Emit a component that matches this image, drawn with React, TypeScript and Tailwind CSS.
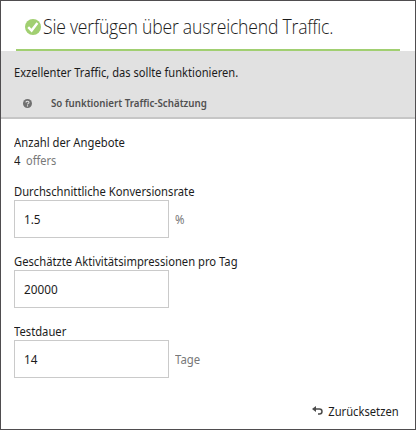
import React from "react";

type FieldProps = {
  label: string;
  value: string;
  unit?: string;
  className: string;
};

function Field({ label, value, unit, className }: FieldProps) {
  return (
    <div className={className}>
      <div className="h-[18px] leading-[20px]">
        <span className="inline-block origin-left scale-x-[0.897]">{label}</span>
      </div>
      <div className="flex items-center gap-1.5">
        <div className="flex h-[38px] w-[155px] items-center border border-[#cacaca] bg-white pl-[9px] pt-[2px]">
          <span className="inline-block origin-left scale-x-[0.94]">{value}</span>
        </div>
        {unit && <span className="inline-block origin-left scale-x-[0.91] pt-[2px] text-[#787878]">{unit}</span>}
      </div>
    </div>
  );
}

export default function App() {
  return (
    <div className="h-[430px] w-[416px] overflow-hidden whitespace-nowrap border border-[#4f4d4f] bg-white font-['Noto_Sans','Open_Sans',sans-serif] text-[12.5px] text-[#1c1c1c]">
      <div className="px-[15px]">
        <div className="flex h-[50px] w-[384px] items-center border-b-2 border-[#a1cf71] pl-[9px] pt-[4px]">
          <svg className="h-4 w-4 shrink-0" viewBox="0 0 16 16">
            <circle cx="8" cy="8" r="8" fill="#a1cf71" />
            <path d="M3.2 8.2 6.6 11.6 12.4 4.1" fill="none" stroke="#fff" strokeWidth="2.4" />
          </svg>
          <h1 className="ml-[2px] origin-left scale-x-[0.88] font-['Open_Sans',sans-serif] text-[20px] font-light leading-6 tracking-[-0.25px]">
            Sie verfügen über ausreichend Traffic.
          </h1>
        </div>
      </div>
      <div className="h-[68px] border-b-2 border-[#c6c6c6] bg-[#e1e1e1] pl-[13px] pt-[13px]">
        <div className="leading-[18px]">
          <span className="inline-block origin-left scale-x-[0.89]">Exzellenter Traffic, das sollte funktionieren.</span>
        </div>
        <div className="mt-[12px] flex h-[18px] items-center pl-[9px] text-[11px] font-semibold text-[#505050]">
          <svg className="h-[9px] w-[9px]" viewBox="0 0 9 9">
            <circle cx="4.5" cy="4.5" r="4.5" fill="#707070" />
            <path d="M3 3.5C3 1.7 6 1.8 6 3.5 6 4.4 4.5 4.4 4.5 5.5M4.5 6.3V7.4" fill="none" stroke="#e1e1e1" strokeWidth="1.1" />
          </svg>
          <span className="ml-[19px] origin-left scale-x-[0.885]">So funktioniert Traffic-Schätzung</span>
        </div>
      </div>
      <div className="px-[13px] pt-[14px]">
        <div className="h-[18px] leading-[20px]">
          <span className="inline-block origin-left scale-x-[0.9]">Anzahl der Angebote</span>
        </div>
        <div className="flex h-[18px] gap-[5px] leading-[20px]">
          <span className="inline-block origin-left scale-x-[0.9]">4</span>
          <span className="inline-block origin-left scale-x-[0.88] text-[#787878]">offers</span>
        </div>
        <Field className="mt-[13px]" label="Durchschnittliche Konversionsrate" value="1.5" unit="%" />
        <Field className="mt-[14px]" label="Geschätzte Aktivitätsimpressionen pro Tag" value="20000" />
        <Field className="mt-[14px]" label="Testdauer" value="14" unit="Tage" />
      </div>
      <div className="mr-[16px] mt-[25px] flex h-[18px] items-center justify-end">
        <svg className="mb-1 mr-[-3px] h-[9px] w-[11px]" viewBox="0 0 11 9">
          <path d="M4 0V6L0 3Z" fill="#4b4b4b" />
          <path d="M3 3H7.5C10.8 3 10.8 8 7.5 8H6" fill="none" stroke="#4b4b4b" strokeWidth="1.5" />
        </svg>
        <span className="origin-right scale-x-[0.895]">Zurücksetzen</span>
      </div>
    </div>
  );
}
